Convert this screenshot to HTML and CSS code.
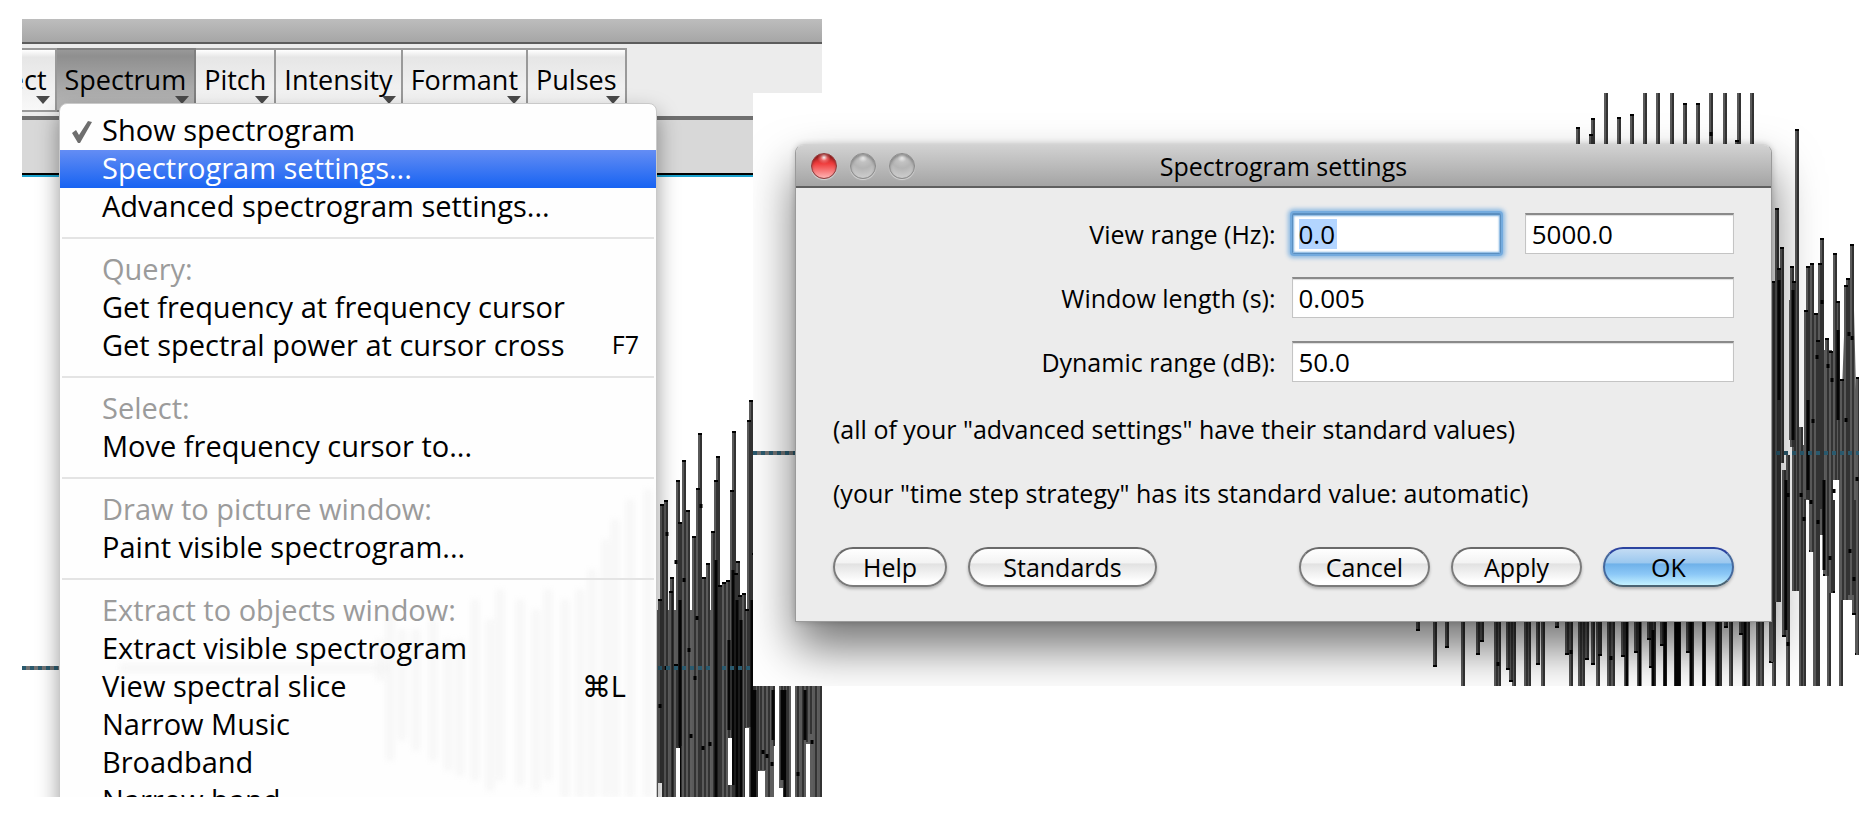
FILE: index.html
```html
<!DOCTYPE html>
<html lang="en">
<head>
<meta charset="utf-8">
<title>Spectrogram settings</title>
<link rel="stylesheet" href="styles.css">
</head>
<body>
<main class="stage">
  <section class="shot editor">
    <svg class="wave" viewBox="22 19 800 778" preserveAspectRatio="none" aria-hidden="true">
      <defs>
        <path id="left-bars" d="M660 599V797M662 504V797M666 500V797M671 591V797M672 577V797M676 664V797M678 480V746M680 522V746M684 460V797M688 510V797M694 536V797M698 488V797M700 433V797M704 577V797M708 563V797M713 531V797M716 480V797M718 456V797M720 585V797M724 582V797M728 580V797M732 490V797M734 431V797M736 573V797M738 561V797M740 595V797M744 593V797M747 609V727M749 420V727M751 400V680M754 553V797M757 680V797M760 680V770M764 680V770M768 680V797M773 680V746M781 680V746M784 680V786M787 680V797M797 680V797M802 680V797M806 680V742M810 680V734M815 680V797M820 680V797"/>
      </defs>
      <path class="fill" d="M656 610H753V797H656ZM753 686H774V797H753ZM779 686H791V797H779ZM795 686H822V797H795Z"/>
      <use href="#left-bars" class="bar-edge"/>
      <use href="#left-bars" class="bar-core"/>
      <use href="#left-bars" class="bar-cap"/>
      <path class="band" d="M680 600V797M716 560V797M729 640V730M733 570V785M737 600V797M741 620V797M752 600V797M782 690V780M805 690V740M785 690V797M755 690V797M773 690V740"/>
      <path class="slit" d="M660 783V797M678 748V797M730 738V785M747 728V797M760 771V797M763 771V797M776 746V797M781 788V797M808 744V797M793 680V797"/>
      <path class="dots" d="M660 704v4M676 560v4M666 666v4M684 578v4M697 616v4M689 648v4M691 734v4M710 742v4M703 746v4M763 750v4M767 754v4M772 762v4M812 740v4M798 772v4M667 532v4M701 504v4M695 676v4"/>
      <path class="axis" d="M22 668H60"/>
      <path class="axis-dash" d="M22 668H60M658 668H712M722 668H753"/>
    </svg>
    <div class="titlebar"></div>
    <div class="toolbar">
      <button class="tool tool-first" type="button">Select</button>
      <button class="tool tool-open" type="button">Spectrum</button>
      <button class="tool" type="button">Pitch</button>
      <button class="tool" type="button">Intensity</button>
      <button class="tool" type="button">Formant</button>
      <button class="tool" type="button">Pulses</button>
    </div>
    <div class="ruler"></div>
    <div class="menu" role="menu">
      <svg class="ghost" viewBox="60 104 596 693" preserveAspectRatio="none" aria-hidden="true">
        <path d="M380 640V680M390 610V760M402 630V740M416 630V750M433 620V760M448 640V770M460 640V775M475 600V780M490 620V790M500 590V780M520 600V785M536 610V790M548 590V780M565 600V797M580 590V797M592 570V797M606 540V797M615 520V797M630 500V797M648 490V797"/>
        <path d="M120 668H390"/>
      </svg>
      <div class="group">
        <button class="item" type="button" role="menuitemcheckbox" aria-checked="true">
          <svg class="tick" viewBox="0 0 22 24" aria-hidden="true"><path d="M1 13L5 10L8 15L17 1L21 2L9 23L7 23Z"/></svg>
          <span>Show spectrogram</span></button>
        <button class="item active" type="button" role="menuitem"><span>Spectrogram settings...</span></button>
        <button class="item" type="button" role="menuitem"><span>Advanced spectrogram settings...</span></button>
      </div>
      <div class="group">
        <button class="item" type="button" role="menuitem" disabled><span>Query:</span></button>
        <button class="item" type="button" role="menuitem"><span>Get frequency at frequency cursor</span></button>
        <button class="item" type="button" role="menuitem"><span>Get spectral power at cursor cross</span><kbd class="key">F7</kbd></button>
      </div>
      <div class="group">
        <button class="item" type="button" role="menuitem" disabled><span>Select:</span></button>
        <button class="item" type="button" role="menuitem"><span>Move frequency cursor to...</span></button>
      </div>
      <div class="group">
        <button class="item" type="button" role="menuitem" disabled><span>Draw to picture window:</span></button>
        <button class="item" type="button" role="menuitem"><span>Paint visible spectrogram...</span></button>
      </div>
      <div class="group">
        <button class="item" type="button" role="menuitem" disabled><span>Extract to objects window:</span></button>
        <button class="item" type="button" role="menuitem"><span>Extract visible spectrogram</span></button>
        <button class="item" type="button" role="menuitem"><span>View spectral slice</span><kbd class="key key-command">⌘L</kbd></button>
        <button class="item" type="button" role="menuitem"><span>Narrow Music</span></button>
        <button class="item" type="button" role="menuitem"><span>Broadband</span></button>
        <button class="item" type="button" role="menuitem"><span>Narrow band</span></button>
      </div>
    </div>
  </section>

  <section class="shot settings">
    <svg class="wave" viewBox="753 93 1106 593" preserveAspectRatio="none" aria-hidden="true">
      <defs>
        <path id="top-bars" d="M1578 127V150M1591 134V150M1593 118V150M1606 90V150M1619 117V150M1632 114V150M1645 90V150M1658 90V150M1672 90V150M1685 103V150M1698 103V150M1711 90V150M1725 90V150M1737 140V150M1739 90V150M1752 90V150"/>
        <path id="side-bars" d="M1773 281V662M1777 208V602M1779 268V602M1782 247V463M1792 266V447M1794 281V591M1797 129V591M1806 310V499M1808 266V500M1812 263V552M1816 313V686M1818 340V686M1820 263V509M1822 238V535M1827 338V576M1831 351V593M1835 253V480M1838 301V480M1842 379V600M1846 285V600M1848 278V595M1852 244V595M1858 377V655"/>
        <path id="bottom-bars" d="M1418 631V610M1435 667V610M1447 648V610M1463 690V610M1478 655V610M1482 642V610M1496 690V610M1499 690V610M1508 670V610M1511 682V610M1514 690V610M1526 690V610M1529 690V610M1538 665V610M1543 690V610M1557 628V610M1567 655V610M1571 690V610M1580 690V610M1583 690V610M1587 660V610M1593 665V610M1598 690V610M1600 656V610M1609 690V610M1613 690V610M1623 657V610M1626 690V610M1636 653V610M1639 690V610M1649 640V610M1651 668V610M1654 690V610M1662 646V610M1665 690V610M1676 690V610M1679 690V610M1688 653V610M1692 690V610M1704 690V610M1717 690V610M1720 690V610M1726 628V610M1731 690V610M1741 635V610M1744 690V610M1748 690V610M1758 690V610M1762 690V610M1771 663V600M1774 690V600M1784 637V470M1788 690V455M1801 690V427M1804 690V445M1811 552V480M1815 690V500M1818 690V500M1825 576V500M1829 690V500M1833 593V500M1841 690V440M1846 600V500M1849 595V500M1854 615V500M1857 655V500"/>
      </defs>
      <path class="fill" d="M1808 330L1812 300V500H1806ZM1816 350H1832V520H1814ZM1842 390L1845 310H1854L1856 390V600H1846L1842 480ZM1789 300H1798V440H1789Z"/>
      <use href="#top-bars" class="bar-edge"/><use href="#top-bars" class="bar-core"/><use href="#top-bars" class="bar-cap"/>
      <use href="#bottom-bars" class="bar-edge"/><use href="#bottom-bars" class="bar-core"/><use href="#bottom-bars" class="bar-cap"/>
      <use href="#side-bars" class="bar-edge"/><use href="#side-bars" class="bar-core"/><use href="#side-bars" class="bar-cap"/>
      <path class="band" d="M1779 280V400M1793 290V440M1786 480V630M1838 330V420M1808 400V490M1824 480V570M1627 610V690M1640 610V690M1653 630V690M1665 610V690M1676 610V690M1679 610V690M1691 610V690M1704 610V690M1718 610V690M1745 610V690"/>
      <path class="dots" d="M1817 355v4M1828 364v4M1832 378v4M1822 300v4M1849 332v4M1852 336v4M1813 419v4M1846 418v4M1788 493v4M1801 493v4M1804 517v4M1811 500v4M1818 520v4M1830 556v4M1834 489v4M1850 549v4M1854 577v4M1857 477v4M1788 642v4M1571 650v4M1611 656v4M1711 132v4M1498 662v4"/>
      <path class="axis" d="M753 453H796"/>
      <path class="axis-dash" d="M753 453H796M1776 453H1859"/>
    </svg>
    <form class="dialog">
      <header class="dialog-title">
        <div class="lights">
          <button class="light light-close" type="button" aria-label="Close"></button>
          <button class="light" type="button" aria-label="Minimize" disabled></button>
          <button class="light" type="button" aria-label="Zoom" disabled></button>
        </div>
        <h1 class="title">Spectrogram settings</h1>
      </header>
      <div class="dialog-body">
        <div class="row">
          <label for="range-from">View range (Hz):</label>
          <div class="pair">
            <div class="field field-focus"><input class="selected" id="range-from" type="text" value="0.0" size="2"></div>
            <input class="field" id="range-to" type="text" value="5000.0" aria-label="View range upper limit (Hz)">
          </div>
        </div>
        <div class="row">
          <label for="window-length">Window length (s):</label>
          <input class="field" id="window-length" type="text" value="0.005">
        </div>
        <div class="row">
          <label for="dynamic-range">Dynamic range (dB):</label>
          <input class="field" id="dynamic-range" type="text" value="50.0">
        </div>
        <div class="notes">
          <p class="note">(all of your "advanced settings" have their standard values)</p>
          <p class="note">(your "time step strategy" has its standard value: automatic)</p>
        </div>
        <div class="actions">
          <button class="push push-short" type="button">Help</button>
          <button class="push push-long" type="button">Standards</button>
          <span class="spring"></span>
          <button class="push" type="button">Cancel</button>
          <button class="push" type="button">Apply</button>
          <button class="push push-default" type="submit">OK</button>
        </div>
      </div>
    </form>
  </section>
</main>
</body>
</html>
```
FILE: styles.css
```css
* {
  box-sizing: border-box;
}

body {
  margin: 0;
  background: #fff;
  color: #000;
  font-family: "Open Sans", "Noto Sans", sans-serif;
}

button,
input {
  margin: 0;
  font: inherit;
  color: inherit;
}

.stage {
  display: grid;
  grid-template-columns: 731fr 69fr 1037fr;
  height: 100vh;
  padding: 19px 16px 17px 22px;
  overflow: hidden;
}

.shot {
  position: relative;
  grid-row: 1;
  overflow: hidden;
  background: #fff;
}

.editor {
  grid-column: 1 / 3;
}

.settings {
  grid-column: 2 / 4;
  align-self: start;
  margin-top: 74px;
  padding: 51px 87px 64px 42px;
}

/* waveform */

.wave {
  position: absolute;
  inset: 0;
  width: 100%;
  height: 100%;
}

.wave path,
.wave use {
  fill: none;
}

.wave .fill {
  fill: #5e5e5e;
}

.bar-edge {
  stroke: #5a5a5a;
  stroke-width: 4;
}

.bar-core {
  stroke: #0c0c0c;
  stroke-width: 1;
  transform: translateX(1px);
}

.bar-cap {
  stroke: #000;
  stroke-width: 4;
  stroke-dasharray: 2 2000;
}

.band {
  stroke: #050505;
  stroke-width: 3;
}

.slit {
  stroke: #fff;
  stroke-width: 4;
}

.dots {
  stroke: #000;
  stroke-width: 3;
}

.axis {
  stroke: #737373;
  stroke-width: 4;
}

.axis-dash {
  stroke: #2a5a6e;
  stroke-width: 4;
  stroke-dasharray: 4 4;
}

/* editor window */

.titlebar {
  height: 25px;
  border-bottom: 2px solid #5c5c5c;
  background: linear-gradient(#bdbdbd, #a6a6a6);
}

.toolbar {
  position: relative;
  display: flex;
  height: 76px;
  padding: 4px 0 8px;
  border-bottom: 4px solid #6f6f6f;
  background: #ececec;
}

.tool {
  position: relative;
  flex: none;
  height: 64px;
  padding: 0 8px;
  border: 2px solid #999;
  border-left-width: 0;
  background: linear-gradient(#fff, #e6e6e6 12%, #f8f8f8);
  font-size: 27px;
  line-height: 60px;
}

.tool::after {
  content: "";
  position: absolute;
  right: 5px;
  bottom: 6px;
  border: 7px solid transparent;
  border-top: 8px solid #4a4a4a;
  border-bottom: 0;
}

.tool-first {
  margin-left: -58px;
}

.tool-open {
  border-color: #808080;
  background: linear-gradient(#989898, #8f8f8f 10%, #bcbcbc);
}

.ruler {
  position: relative;
  height: 57px;
  border-bottom: 2px solid #1aa3cf;
  background: #d8d8d8;
  box-shadow: inset 0 -2px #000;
}

.menu {
  position: absolute;
  top: 84px;
  left: 37px;
  width: 598px;
  padding-top: 8px;
  border: 1px solid #c9c9c9;
  border-radius: 8px 8px 0 0;
  background: #fefefe;
  box-shadow: 0 10px 22px rgba(0, 0, 0, 0.4);
}

.ghost {
  position: absolute;
  inset: 0;
  width: 100%;
  height: 693px;
  filter: blur(3px);
}

.ghost path {
  fill: none;
  stroke: #f4f4f4;
  stroke-width: 6;
}

.group {
  position: relative;
}

.group + .group {
  margin-top: 11px;
  padding-top: 12px;
}

.group + .group::before {
  content: "";
  display: block;
  height: 2px;
  margin: -12px 2px 12px;
  background: #e4e4e4;
}

.item {
  display: flex;
  align-items: center;
  justify-content: space-between;
  position: relative;
  width: 100%;
  height: 38px;
  padding: 0 17px 3px 42px;
  border: 0;
  background: none;
  font-size: 29px;
  line-height: 35px;
  text-align: left;
  white-space: nowrap;
}

.item:disabled {
  color: #9b9b9b;
}

.item.active {
  background: linear-gradient(#648df4, #1763f2);
  color: #fff;
}

.tick {
  position: absolute;
  top: 8px;
  left: 11px;
  width: 22px;
  height: 24px;
  fill: #6e6e6e;
}

.key {
  font-family: inherit;
  font-size: 25px;
}

.key-command {
  margin-right: 13px;
  font-family: "Open Sans", "DejaVu Sans", sans-serif;
  font-size: 29px;
}

/* dialog */

.dialog {
  position: relative;
  border: 1px solid #9a9a9a;
  border-top-color: #d4d4d4;
  border-radius: 9px 9px 0 0;
  background: #ececec;
  box-shadow: 0 26px 48px rgba(0, 0, 0, 0.55), 0 0 6px rgba(0, 0, 0, 0.2);
  font-size: 25px;
}

.dialog-title {
  display: grid;
  grid-template-columns: 1fr auto 1fr;
  align-items: center;
  height: 43px;
  padding: 0 15px;
  border-bottom: 2px solid #5f5f5f;
  border-radius: 8px 8px 0 0;
  background: linear-gradient(#d2d2d2, #a4a4a4);
}

.title {
  margin: 0;
  font-size: 25px;
  font-weight: 400;
  line-height: 40px;
}

.lights {
  display: flex;
  gap: 13px;
}

.light {
  width: 26px;
  height: 26px;
  padding: 0;
  border: 1px solid #8b8b8b;
  border-radius: 50%;
  background: radial-gradient(circle at 50% 15%, #eee 0, #c2c2c2 20%, #b5b5b5 45%, #d6d6d6 100%);
  box-shadow: inset 0 2px 3px rgba(0, 0, 0, 0.3), 0 1px 1px rgba(255, 255, 255, 0.5);
}

.light-close {
  border-color: #8e3a3a;
  background: radial-gradient(circle at 50% 14%, #fff 0, #e66 14%, transparent 28%), linear-gradient(#a11c1c, #f03d3d 40%, #ffb4b4);
}

.dialog-body {
  padding: 25px 37px 34px;
}

.row {
  display: grid;
  grid-template-columns: 1fr 1fr;
  align-items: center;
  gap: 16px;
  height: 41px;
  margin-bottom: 23px;
}

.row label {
  text-align: right;
}

.pair {
  display: grid;
  grid-template-columns: 1fr 1fr;
  gap: 24px;
}

.field {
  width: 100%;
  height: 41px;
  padding: 0 6px;
  border: 1px solid #c4c4c4;
  border-top: 2px solid #8a8a8a;
  border-radius: 0;
  background: #fff;
  box-shadow: inset 0 1px 1px #ddd;
  font-size: 26px;
  outline: 0;
}

.field-focus {
  display: flex;
  align-items: center;
  border-color: #5b8fc0;
  border-radius: 2px;
  box-shadow: 0 0 0 2px #74abde, 0 0 4px 4px #8cb9e2, inset 0 0 2px 1px #74abde;
}

.selected {
  width: 38px;
  height: 30px;
  padding: 0;
  border: 0;
  outline: 0;
  background: #b3d5ff;
}

.notes {
  padding-top: 8px;
}

.note {
  height: 32px;
  margin: 0 0 32px;
  line-height: 32px;
  white-space: nowrap;
}

.actions {
  display: flex;
  gap: 21px;
  padding-top: 6px;
}

.spring {
  flex: 1;
}

.push {
  flex: none;
  width: 131px;
  height: 40px;
  padding: 0;
  border: 2px solid #7b7b7b;
  border-top-color: #6a6a6a;
  border-radius: 20px;
  background: linear-gradient(#fff, #f3f3f3 38%, #e2e2e2 42%, #fff 90%);
  box-shadow: 0 2px 3px rgba(0, 0, 0, 0.25);
  line-height: 34px;
}

.push-short {
  width: 114px;
}

.push-long {
  width: 189px;
}

.push-default {
  border-color: #2c44a0 #45689c #4b6473;
  background: linear-gradient(#c3dcf4, #9cc8ef 38%, #6fb1e9 42%, #8cc8f7 70%, #c4f2ff);
}
```
